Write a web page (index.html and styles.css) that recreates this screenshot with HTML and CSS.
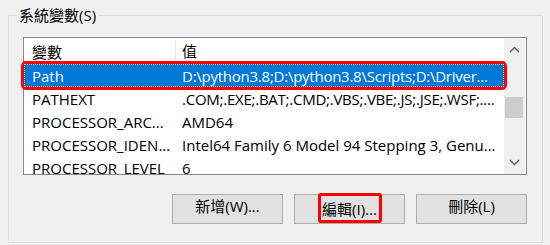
FILE: index.html
```html
<!DOCTYPE html>
<html lang="zh-Hant">
<head>
  <meta charset="UTF-8">
  <title>系統變數</title>
  <link rel="stylesheet" href="styles.css">
</head>
<body>

  <fieldset class="group">
    <legend>系統變數(S)</legend>

    <div class="listbox">
      <div class="list">
        <div class="row head">
          <span class="c1">變數</span>
          <span class="c2">值</span>
        </div>
        <div class="row sel">
          <span class="c1">Path</span>
          <span class="c2 tight">D:\python3.8;D:\python3.8\Scripts;D:\Driver...</span>
        </div>
        <div class="row">
          <span class="c1">PATHEXT</span>
          <span class="c2 tight">.COM;.EXE;.BAT;.CMD;.VBS;.VBE;.JS;.JSE;.WSF;....</span>
        </div>
        <div class="row">
          <span class="c1">PROCESSOR_ARC...</span>
          <span class="c2">AMD64</span>
        </div>
        <div class="row">
          <span class="c1">PROCESSOR_IDEN...</span>
          <span class="c2">Intel64 Family 6 Model 94 Stepping 3, Genu...</span>
        </div>
        <div class="row">
          <span class="c1">PROCESSOR_LEVEL</span>
          <span class="c2">6</span>
        </div>
      </div>

      <div class="scrollbar">
        <svg class="arrow" width="21" height="24" viewBox="0 0 21 24">
          <polyline points="6,14 10.5,9.5 15,14" fill="none" stroke="#606060" stroke-width="1.5"/>
        </svg>
        <div class="track"><div class="thumb"></div></div>
        <svg class="arrow" width="21" height="24" viewBox="0 0 21 24">
          <polyline points="6,10 10.5,14.5 15,10" fill="none" stroke="#606060" stroke-width="1.5"/>
        </svg>
      </div>
    </div>

    <div class="buttons">
      <button>新增(W)...</button>
      <button><span class="mark">編輯(I)...</span></button>
      <button>刪除(L)</button>
    </div>
  </fieldset>

</body>
</html>
```

FILE: styles.css
```css
body {
  margin: 0;
  background: #f0f0f0;
  font-family: "Open Sans", "Noto Sans CJK TC", sans-serif;
  font-size: 15px;
  color: #000;
}
.group {
  margin: 5px 0 0 8px;
  width: 535px;
  box-sizing: border-box;
  padding: 12px 15px 18px 14px;
  border: 1px solid #dcdcdc;
  min-width: 0;
}
.group legend {
  margin-left: -6px;
  padding: 0 2px;
  line-height: 20px;
}
.listbox {
  display: flex;
  height: 138px;
  box-sizing: border-box;
  border: 1px solid #828790;
  background: #fff;
}
.list {
  width: 480px;
  height: 136px;
  overflow: visible;
  clip-path: inset(0 -4px 0 -4px);
}
.row {
  display: flex;
  height: 23px;
  align-items: center;
  white-space: nowrap;
}
.row.head {
  height: 26px;
}
.c1 {
  width: 151px;
  padding-left: 8px;
  box-sizing: border-box;
  overflow: hidden;
}
.c2 {
  flex: 1;
  padding-left: 7px;
  overflow: hidden;
}
.tight {
  letter-spacing: -0.25px;
}
.head .c2 {
  border-left: 1px solid #e5e5e5;
  padding-left: 6px;
  height: 22px;
  line-height: 22px;
}
.sel {
  position: relative;
  background: #0078d7;
  color: #fff;
  outline: 3.5px solid #ff0000;
  border-radius: 2px;
}
.sel::after {
  content: "";
  position: absolute;
  inset: 0;
  border: 1px dotted #f0a860;
}
.scrollbar {
  width: 21px;
  background: #f0f0f0;
  display: flex;
  flex-direction: column;
}
.arrow {
  display: block;
}
.track {
  flex: 1;
  padding-top: 35px;
}
.thumb {
  margin: 0 2px 0 1px;
  height: 21px;
  background: #cdcdcd;
}
.buttons {
  display: flex;
  justify-content: flex-end;
  gap: 11px;
  margin-top: 19px;
}
button {
  width: 111px;
  height: 30px;
  padding: 0;
  background: #e1e1e1;
  border: 1px solid #adadad;
  font-family: inherit;
  font-size: 15px;
  color: #000;
  display: flex;
  justify-content: center;
  align-items: stretch;
}
.mark {
  display: flex;
  align-items: center;
  margin: -2px 0 0 1px;
  padding: 0 2px 0 1px;
  border: 3px solid #ff0000;
  border-radius: 3px;
}
```
